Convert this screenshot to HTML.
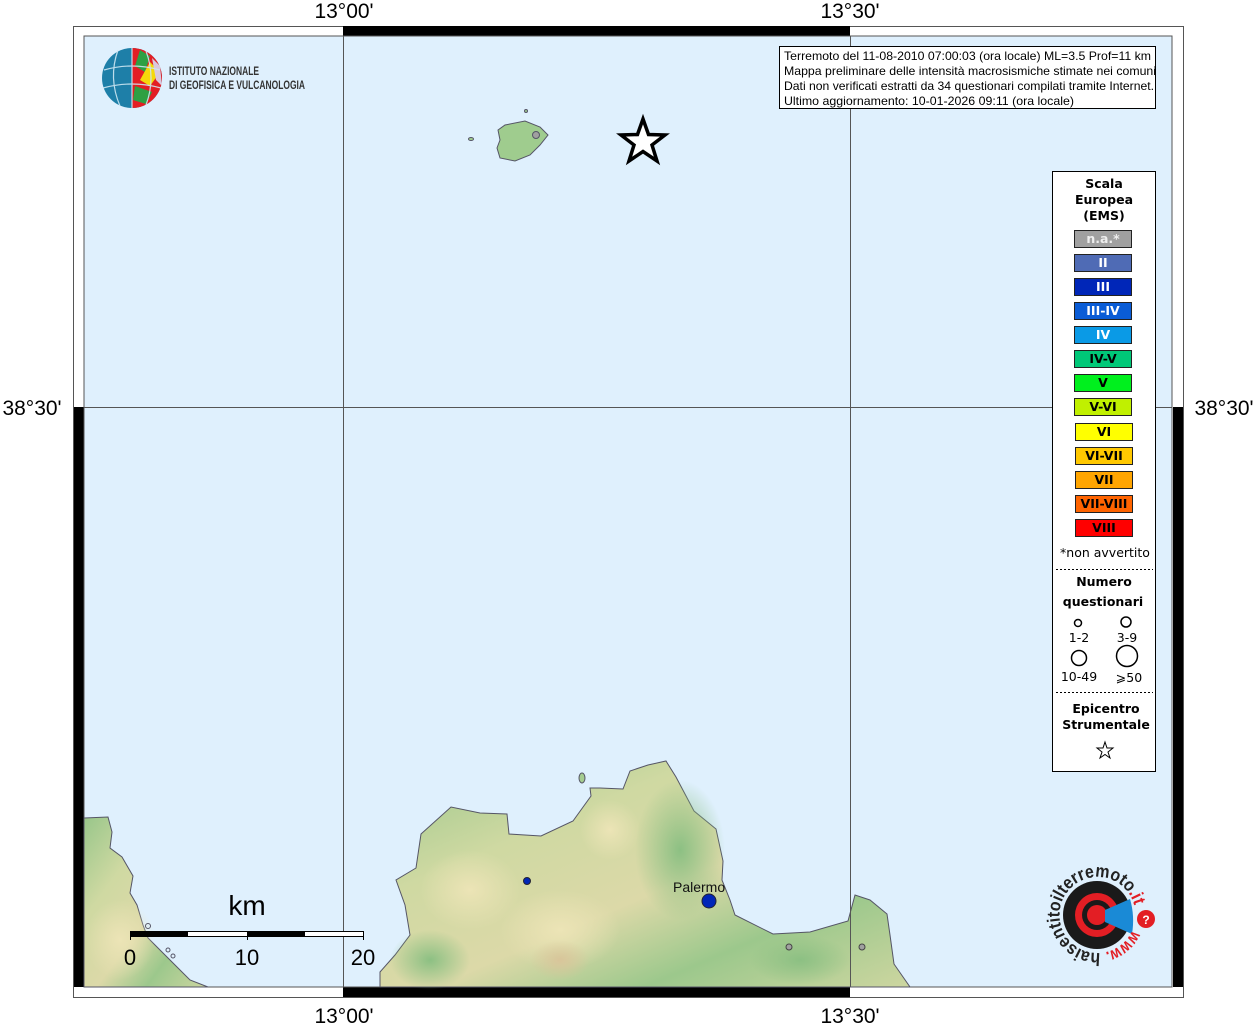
<!DOCTYPE html>
<html><head><meta charset="utf-8"><style>
html,body{margin:0;padding:0;background:#fff;}
svg{display:block;font-family:"Liberation Sans",sans-serif;}
</style></head><body>
<svg width="1256" height="1024" viewBox="0 0 1256 1024" xmlns="http://www.w3.org/2000/svg">
<defs>
<linearGradient id="land" x1="0" y1="0" x2="1" y2="1">
<stop offset="0" stop-color="#98c68a"/>
<stop offset="0.3" stop-color="#cfd9a2"/>
<stop offset="0.55" stop-color="#dcd9a8"/>
<stop offset="0.75" stop-color="#9cc88c"/>
<stop offset="1" stop-color="#cdd6a0"/>
</linearGradient>
<radialGradient id="hill1" cx="0.5" cy="0.5" r="0.5"><stop offset="0" stop-color="#ece4b6"/><stop offset="1" stop-color="#ece4b6" stop-opacity="0"/></radialGradient>
<radialGradient id="hill2" cx="0.5" cy="0.5" r="0.5"><stop offset="0" stop-color="#d9c59a"/><stop offset="1" stop-color="#d9c59a" stop-opacity="0"/></radialGradient>
<radialGradient id="gr" cx="0.5" cy="0.5" r="0.5"><stop offset="0" stop-color="#8cc083"/><stop offset="1" stop-color="#8cc083" stop-opacity="0"/></radialGradient>
<path id="circ" d="M1097,953 A38,38 0 1,1 1098,953"/>
</defs>
<rect width="1256" height="1024" fill="#fff"/>
<rect x="73.5" y="26.5" width="1110" height="971" fill="#fff" stroke="#555"/>
<rect x="343" y="26" width="507" height="10" fill="#000"/>
<rect x="343" y="987" width="507" height="10" fill="#000"/>
<rect x="74" y="407" width="10" height="580" fill="#000"/>
<rect x="1173" y="407" width="10" height="580" fill="#000"/>
<rect x="84" y="36" width="1088" height="951" fill="#dff0fd" stroke="#555" stroke-width="1"/>
<path d="M84,818 L108,817 L112,832 L110,848 L122,857 L133,876 L130,893 L137,905 L143,925 L148,938 L160,950 L175,965 L190,980 L208,987 L84,987 Z" fill="url(#land)" stroke="#556" stroke-width="1"/>
<path d="M380,972 L395,955 L410,935 L405,905 L396,880 L416,868 L421,834 L451,807 L480,813 L507,814 L509,834 L541,836 L573,821 L591,796 L590,788 L600,788 L623,789 L630,771 L648,765 L666,761 L676,777 L694,811 L716,829 L723,861 L722,880 L730,900 L735,915 L773,934 L810,932 L848,921 L855,895 L870,900 L887,914 L890,935 L894,964 L910,987 L380,987 Z" fill="url(#land)" stroke="#556" stroke-width="1"/>
<ellipse cx="680" cy="850" rx="45" ry="70" fill="url(#gr)"/>
<ellipse cx="800" cy="960" rx="50" ry="25" fill="url(#gr)"/>
<ellipse cx="430" cy="960" rx="40" ry="30" fill="url(#gr)"/>
<ellipse cx="560" cy="930" rx="60" ry="40" fill="url(#hill1)"/>
<ellipse cx="470" cy="890" rx="50" ry="40" fill="url(#hill1)"/>
<ellipse cx="560" cy="960" rx="30" ry="20" fill="url(#hill2)"/>
<ellipse cx="610" cy="830" rx="30" ry="30" fill="url(#hill1)"/>
<ellipse cx="120" cy="940" rx="35" ry="40" fill="url(#hill1)"/>
<ellipse cx="582" cy="778" rx="3" ry="5" fill="#a5cc90" stroke="#556"/>
<path d="M498,130 L505,125 L525,121 L540,127 L548,135 L540,145 L530,155 L515,161 L500,158 L497,148 L500,140 Z" fill="#9fcc8e" stroke="#556"/>
<circle cx="536" cy="135" r="3.5" fill="#a0a0a0" stroke="#556"/>
<ellipse cx="471" cy="139" rx="2.5" ry="1.5" fill="#9fcc8e" stroke="#556"/>
<circle cx="526" cy="111" r="1.5" fill="#9fcc8e" stroke="#556"/>
<circle cx="148" cy="926" r="2.5" fill="none" stroke="#556"/>
<circle cx="168" cy="950" r="2" fill="none" stroke="#556"/>
<circle cx="173" cy="956" r="2" fill="none" stroke="#556"/>
<line x1="343.5" y1="36" x2="343.5" y2="987" stroke="#555"/>
<line x1="850.5" y1="36" x2="850.5" y2="987" stroke="#555"/>
<line x1="84" y1="407.5" x2="1172" y2="407.5" stroke="#555"/>
<g font-size="21" fill="#000" text-anchor="middle">
<text x="344" y="18">13°00'</text><text x="850" y="18">13°30'</text>
<text x="344" y="1023">13°00'</text><text x="850" y="1023">13°30'</text>
<text x="32" y="415">38°30'</text><text x="1224" y="415">38°30'</text>
</g>
<path d="M643,119 L648.5,134.5 L665,135 L652,145 L657,161 L643,151.5 L629,161 L634,145 L621,135 L637.5,134.5 Z" fill="#fff" stroke="#000" stroke-width="3.5"/>
<circle cx="527" cy="881" r="3.5" fill="#0026b8" stroke="#223"/>
<circle cx="709" cy="901" r="7" fill="#0026b8" stroke="#223"/>
<circle cx="789" cy="947" r="3" fill="#a0a0a0" stroke="#444"/>
<circle cx="862" cy="947" r="3" fill="#a0a0a0" stroke="#444"/>
<text x="673" y="892" font-size="14" fill="#111">Palermo</text>
<text x="247" y="915" font-size="28" text-anchor="middle">km</text>
<rect x="130.5" y="931.5" width="233" height="5" fill="#fff" stroke="#000"/>
<rect x="130" y="931" width="58" height="6" fill="#000"/>
<rect x="247" y="931" width="58" height="6" fill="#000"/>
<line x1="130.5" y1="931" x2="130.5" y2="940" stroke="#000"/>
<line x1="247.5" y1="931" x2="247.5" y2="940" stroke="#000"/>
<line x1="363.5" y1="931" x2="363.5" y2="940" stroke="#000"/>
<g font-size="22" text-anchor="middle"><text x="130" y="965">0</text><text x="247" y="965">10</text><text x="363" y="965">20</text></g>
<rect x="779.5" y="46.5" width="376" height="62" fill="#fff" stroke="#000"/>
<g font-size="12" fill="#000">
<text x="784" y="60" textLength="367" lengthAdjust="spacingAndGlyphs">Terremoto del 11-08-2010 07:00:03 (ora locale) ML=3.5 Prof=11 km</text>
<text x="784" y="75" textLength="372" lengthAdjust="spacingAndGlyphs">Mappa preliminare delle intensità macrosismiche stimate nei comuni</text>
<text x="784" y="90" textLength="370" lengthAdjust="spacingAndGlyphs">Dati non verificati estratti da 34 questionari compilati tramite Internet.</text>
<text x="784" y="105" textLength="290" lengthAdjust="spacingAndGlyphs">Ultimo aggiornamento: 10-01-2026 09:11 (ora locale)</text>
</g>
<circle cx="132" cy="78" r="30" fill="#1e7fa8"/>
<path d="M132,48 A30,30 0 0,1 162,78 A30,30 0 0,1 132,108 Z" fill="#e31e24"/>
<path d="M140,50 L150,56 L145,72 L135,66 Z" fill="#2ea043"/>
<path d="M150,62 L160,72 L150,86 L140,80 Z" fill="#f5d90a"/>
<path d="M135,86 L152,92 L146,104 L133,100 Z" fill="#2ea043"/>
<path d="M152,58 L160,66 L162,86 L156,80 Z" fill="#d9c9dd"/>
<g stroke="#cfe8f3" stroke-width="1.2" fill="none" opacity="0.9">
<path d="M104,70 Q132,62 160,70"/><path d="M103,88 Q132,80 161,88"/>
<path d="M118,50 Q108,78 120,106"/><path d="M132,48 L132,108"/><path d="M146,51 Q156,78 146,105"/>
</g>
<g font-size="12" fill="#333" font-weight="bold">
<text x="169" y="75" textLength="90" lengthAdjust="spacingAndGlyphs">ISTITUTO NAZIONALE</text>
<text x="169" y="89" textLength="136" lengthAdjust="spacingAndGlyphs">DI GEOFISICA E VULCANOLOGIA</text>
</g>
<rect x="1052.5" y="171.5" width="103" height="600" fill="#fff" stroke="#000"/>
<g font-size="12.5" font-weight="bold" text-anchor="middle" fill="#000" font-family="DejaVu Sans,sans-serif">
<text x="1104" y="188">Scala</text><text x="1104" y="204">Europea</text><text x="1104" y="220">(EMS)</text>
</g>
<g stroke="#222" stroke-width="1">
<rect x="1074.5" y="230.5" width="57" height="17" fill="#a0a0a0"/>
<rect x="1074.5" y="254.5" width="57" height="17" fill="#4f6bb5"/>
<rect x="1074.5" y="278.5" width="57" height="17" fill="#0026b8"/>
<rect x="1074.5" y="302.5" width="57" height="17" fill="#0a5cd6"/>
<rect x="1074.5" y="326.5" width="57" height="17" fill="#0a9ae6"/>
<rect x="1074.5" y="350.5" width="57" height="17" fill="#00c878"/>
<rect x="1074.5" y="374.5" width="57" height="17" fill="#00f01e"/>
<rect x="1074.5" y="398.5" width="57" height="17" fill="#c0f000"/>
<rect x="1075.5" y="423.5" width="57" height="17" fill="#ffff00"/>
<rect x="1075.5" y="447.5" width="57" height="17" fill="#ffc800"/>
<rect x="1075.5" y="471.5" width="57" height="17" fill="#ffa500"/>
<rect x="1075.5" y="495.5" width="57" height="17" fill="#ff6400"/>
<rect x="1075.5" y="519.5" width="57" height="17" fill="#ff0000"/>
</g>
<g font-size="12.5" font-weight="bold" text-anchor="middle" font-family="DejaVu Sans,sans-serif">
<text x="1103" y="243" fill="#eee">n.a.*</text>
<text x="1103" y="267" fill="#fff">II</text>
<text x="1103" y="291" fill="#fff">III</text>
<text x="1103" y="315" fill="#fff">III-IV</text>
<text x="1103" y="339" fill="#fff">IV</text>
<text x="1103" y="363">IV-V</text>
<text x="1103" y="387">V</text>
<text x="1103" y="411">V-VI</text>
<text x="1104" y="436">VI</text>
<text x="1104" y="460">VI-VII</text>
<text x="1104" y="484">VII</text>
<text x="1104" y="508">VII-VIII</text>
<text x="1104" y="532">VIII</text>
</g>
<g font-family="DejaVu Sans,sans-serif" text-anchor="middle" fill="#000">
<text x="1105" y="557" font-size="12.5">*non avvertito</text>
<line x1="1056" y1="569.5" x2="1153" y2="569.5" stroke="#000" stroke-dasharray="2,2"/>
<text x="1104" y="586" font-size="12.5" font-weight="bold">Numero</text>
<text x="1103" y="606" font-size="12.5" font-weight="bold">questionari</text>
<circle cx="1078" cy="623" r="3.5" fill="none" stroke="#000" stroke-width="1.5"/>
<circle cx="1126" cy="622" r="5" fill="none" stroke="#000" stroke-width="1.5"/>
<text x="1079" y="642" font-size="12.5">1-2</text><text x="1127" y="642" font-size="12.5">3-9</text>
<circle cx="1079" cy="658" r="7.5" fill="none" stroke="#000" stroke-width="1.5"/>
<circle cx="1127" cy="656" r="10.5" fill="none" stroke="#000" stroke-width="1.5"/>
<text x="1079" y="681" font-size="12.5">10-49</text><text x="1129" y="682" font-size="12.5">⩾50</text>
<line x1="1056" y1="692.5" x2="1153" y2="692.5" stroke="#000" stroke-dasharray="2,2"/>
<text x="1106" y="713" font-size="12.5" font-weight="bold">Epicentro</text>
<text x="1106" y="729" font-size="12.5" font-weight="bold">Strumentale</text>
<path d="M1105,742 L1107,748 L1113,748 L1108,752 L1110,758 L1105,754.5 L1100,758 L1102,752 L1097,748 L1103,748 Z" fill="#fff" stroke="#000" stroke-width="1"/>
</g>
<!-- haisentito logo -->
<circle cx="1097" cy="915" r="34" fill="#1a1a1a"/>
<circle cx="1097" cy="915" r="22" fill="#e31e24"/>
<circle cx="1097" cy="915" r="15" fill="#1a1a1a"/>
<circle cx="1097" cy="915" r="10" fill="#e31e24"/>
<path d="M1105,910 L1130,899 Q1135,916 1132,934 L1105,922 Z" fill="#1a8ad6"/>
<circle cx="1146" cy="919" r="9" fill="#e31e24"/>
<text x="1146" y="924" font-size="12" font-weight="bold" fill="#fff" text-anchor="middle">?</text>
<g transform="rotate(-5 1097 915)">
<text font-size="18" fill="#222" font-weight="bold"><textPath href="#circ" startOffset="0" textLength="172" lengthAdjust="spacingAndGlyphs">haisentitoilterremoto<tspan fill="#e31e24">.it</tspan></textPath></text>
<text font-size="17" fill="#e31e24" font-weight="bold"><textPath href="#circ" startOffset="197" textLength="36" lengthAdjust="spacingAndGlyphs">www.</textPath></text>
</g>
</svg>
</body></html>
